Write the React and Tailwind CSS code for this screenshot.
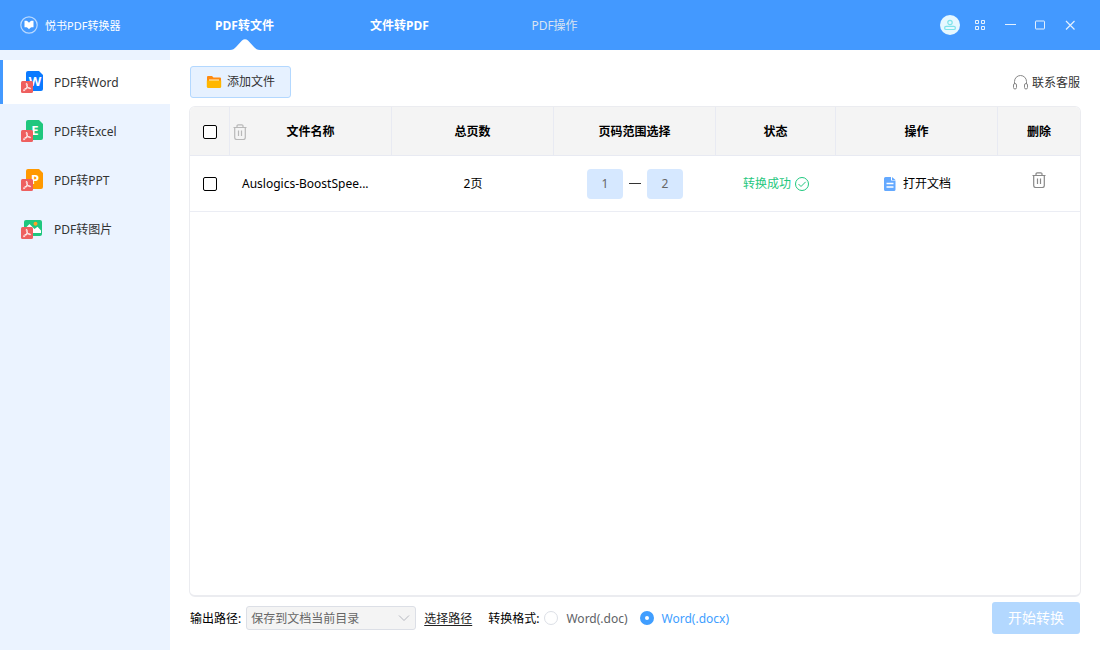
import { useState } from 'react';

const PdfBadge = ({ y = 10 }) => (
    <g transform={`translate(0 ${y})`}>
        <rect width="12" height="12" rx="1.5" fill="#ee5f5f" />
        <path d="M5.3 2.4c1.200-.3 1.100 1.800.8 3.200C5.600 7.700 4 10 2.800 9.800c-1.100-.5.7-2.300 2.700-2.700 2-.5 4.200-.5 4.100.4-.2.9-2.700-.5-3.600-2.300-.5-.9-1-2.500-.7-2.800z" fill="none" stroke="#fff" strokeWidth="0.9" />
    </g>
);

const DocIcon = ({ color, letter }) => (
    <svg width="22" height="22" viewBox="0 0 22 22" aria-hidden="true">
        <path d="M7 0h11l4 4v14a2 2 0 0 1-2 2H7a2 2 0 0 1-2-2V2a2 2 0 0 1 2-2z" fill={color} />
        <text x="14" y="15" textAnchor="middle" fill="#fff" fontSize="13" fontWeight="700" fontFamily="Noto Sans, sans-serif">{letter}</text>
        <PdfBadge />
    </svg>
);

const ImageIcon = () => (
    <svg width="22" height="22" viewBox="0 0 22 22" aria-hidden="true">
        <rect x="3" y="2" width="18" height="16" rx="2" fill="#1fc77e" />
        <circle cx="14.500" cy="5.800" r="2" fill="#fca326" />
        <path d="M4 10.500l4.500-4.500 5 5 3-2.200 3.500 3.700v2.500H4z" fill="#fff" />
        <PdfBadge y={9} />
    </svg>
);

const TrashIcon = () => (
    <svg width="14" height="16" viewBox="0 0 14 16" fill="none" stroke="currentColor" strokeWidth="1.200" aria-hidden="true">
        <path d="M.5 3.500h13M4 3.500V2a1.200 1.200 0 0 1 1.200-1.200h3.600A1.200 1.200 0 0 1 10 2v1.500M1.700 3.500v10a2 2 0 0 0 2 2h6.600a2 2 0 0 0 2-2v-10M5.500 6.500v5.500M8.500 6.500v5.500" />
    </svg>
);

const menus = [
    { key: 'word', label: 'PDF转Word', icon: <DocIcon color="#0b7aff" letter="W" /> },
    { key: 'excel', label: 'PDF转Excel', icon: <DocIcon color="#1fc77e" letter="E" /> },
    { key: 'ppt', label: 'PDF转PPT', icon: <DocIcon color="#ff9900" letter="P" /> },
    { key: 'image', label: 'PDF转图片', icon: <ImageIcon /> },
];

const tabs = ['PDF转文件', '文件转PDF', 'PDF操作'];

const Header = () => {
    const [activeTab, setActiveTab] = useState(0);

    return (
        <header className="flex h-[50px] shrink-0 items-center bg-[#4399ff] pr-5 text-white">
            <div className="flex w-[167px] items-center gap-[7px] pl-5 text-[11px]">
                <svg width="18" height="18" viewBox="0 0 18 18" aria-hidden="true">
                    <circle cx="9" cy="9" r="8.200" fill="none" stroke="#b9d9ff" strokeWidth="1.200" />
                    <path d="M4.500 4.800C6.500 4.500 8 5 9 6.800c1-1.800 2.500-2.300 4.500-2v6.500C11.500 11 10 11.500 9 13.300 8 11.500 6.500 11 4.500 11.300z" fill="#fff" />
                </svg>
                <span className="pt-0.5">悦书PDF转换器</span>
            </div>
            <nav className="flex h-full flex-1">
                {tabs.map((tab, index) => (
                    <button
                        key={tab}
                        onClick={() => setActiveTab(index)}
                        className={`relative h-full w-[155px] pt-0.5 ${index === 2 ? 'text-[#d9e4f2]' : 'font-bold'}`}
                    >
                        {tab}
                        {activeTab === index && (
                            <svg className="absolute bottom-0 left-1/2 -translate-x-1/2" width="30" height="11" viewBox="0 0 30 11" aria-hidden="true">
                                <path d="M0 11c3 0 4-1 6-3l6-6.500q3-2.500 6 0L24 8c2 2 3 3 6 3z" fill="#fff" />
                            </svg>
                        )}
                    </button>
                ))}
            </nav>
            <div className="flex items-center gap-2.5">
                <button aria-label="用户">
                    <svg width="20" height="20" viewBox="0 0 20 20" fill="none" stroke="#7fe3ea" strokeWidth="1.200">
                        <circle cx="10" cy="10" r="10" fill="#e6f8ff" stroke="none" />
                        <circle cx="10" cy="7.500" r="2.200" />
                        <rect x="4.600" y="11.300" width="10.800" height="3.200" rx="1.600" />
                    </svg>
                </button>
                <button aria-label="菜单">
                    <svg width="20" height="20" viewBox="0 0 20 20" fill="none" stroke="#e3f0ff">
                        <path d="M5.500 5.500h3v3h-3zM11.500 5.500h3v3h-3zM5.500 11.500h3v3h-3zM11.500 11.500h3v3h-3z" />
                    </svg>
                </button>
                <button aria-label="最小化">
                    <svg width="20" height="20" viewBox="0 0 20 20" stroke="#e3f0ff"><path d="M5 9.500h11" /></svg>
                </button>
                <button aria-label="最大化">
                    <svg width="20" height="20" viewBox="0 0 20 20" fill="none" stroke="#e3f0ff"><rect x="5.500" y="6" width="9" height="8" rx="0.500" /></svg>
                </button>
                <button aria-label="关闭">
                    <svg width="20" height="20" viewBox="0 0 20 20" stroke="#e3f0ff" strokeWidth="1.200"><path d="M6 6l8.500 8.500M14.500 6L6 14.500" /></svg>
                </button>
            </div>
        </header>
    );
};

const Sidebar = () => {
    const [active, setActive] = useState('word');

    return (
        <aside className="flex w-[170px] shrink-0 flex-col gap-[5px] bg-[#ebf3ff] pt-2.5">
            {menus.map((item) => (
                <button
                    key={item.key}
                    onClick={() => setActive(item.key)}
                    className={`flex h-11 items-center gap-[11px] border-l-3 pl-[18px] text-[#333] ${active === item.key ? 'border-[#4399ff] bg-white' : 'border-transparent'}`}
                >
                    {item.icon}
                    <span className="pt-0.5">{item.label}</span>
                </button>
            ))}
        </aside>
    );
};

const checkboxClass = 'block mx-auto size-3.5 appearance-none rounded-[2px] border border-black bg-white checked:bg-[#4399ff]';
const thClass = 'h-[49px] border-b border-[#e8eaf2] bg-[#f4f4f4] p-0 pt-0.5 font-bold';
const tdClass = 'h-14 border-b border-[#ebedf4] p-0 text-center';
const pageClass = 'h-[30px] w-9 rounded bg-[#d6e8ff] text-center text-[#666] outline-none';

const FileTable = () => {
    const [checked, setChecked] = useState(false);
    const [startPage, setStartPage] = useState('1');
    const [endPage, setEndPage] = useState('2');

    return (
        <div className="-mx-px mt-2 flex-1 overflow-hidden rounded-md border border-b-2 border-[#ebecf0]">
            <table className="w-full table-fixed border-separate border-spacing-0 text-black">
                <colgroup>
                    <col className="w-10" />
                    <col />
                    <col />
                    <col />
                    <col className="w-[120px]" />
                    <col />
                    <col className="w-[82px]" />
                </colgroup>
                <thead>
                    <tr>
                        <th className={`${thClass} border-r`}>
                            <input type="checkbox" aria-label="全选" className={checkboxClass} checked={checked} onChange={() => setChecked(!checked)} />
                        </th>
                        <th className={`${thClass} border-r`}>
                            <div className="grid grid-cols-[14px_1fr_14px] items-center px-[3px]">
                                <button aria-label="删除所选" className="text-[#b8b8b8]"><TrashIcon /></button>
                                <span>文件名称</span>
                            </div>
                        </th>
                        <th className={`${thClass} border-r`}>总页数</th>
                        <th className={`${thClass} border-r`}>页码范围选择</th>
                        <th className={`${thClass} border-r`}>状态</th>
                        <th className={`${thClass} border-r`}>操作</th>
                        <th className={thClass}>删除</th>
                    </tr>
                </thead>
                <tbody>
                    <tr>
                        <td className={tdClass}>
                            <input type="checkbox" aria-label="选择文件" className={checkboxClass} checked={checked} onChange={() => setChecked(!checked)} />
                        </td>
                        <td className={tdClass}>
                            <div className="whitespace-nowrap pl-3 text-left">Auslogics-BoostSpee...</div>
                        </td>
                        <td className={tdClass}>2页</td>
                        <td className={tdClass}>
                            <div className="flex items-center justify-center gap-1.5">
                                <input aria-label="起始页" className={pageClass} value={startPage} onChange={(e) => setStartPage(e.target.value)} />
                                <span className="h-px w-3 bg-[#333]" />
                                <input aria-label="结束页" className={pageClass} value={endPage} onChange={(e) => setEndPage(e.target.value)} />
                            </div>
                        </td>
                        <td className={tdClass}>
                            <div className="flex items-center justify-center gap-1 text-[#1fc77e]">
                                <span>转换成功</span>
                                <svg width="14" height="14" viewBox="0 0 14 14" fill="none" stroke="currentColor" aria-hidden="true">
                                    <circle cx="7" cy="7" r="6.500" />
                                    <path d="M3.500 7l2.500 2.500 4.700-4.700" />
                                </svg>
                            </div>
                        </td>
                        <td className={tdClass}>
                            <button className="mx-auto flex items-center gap-1.5">
                                <svg width="14" height="14" viewBox="0 0 14 14" aria-hidden="true">
                                    <path d="M2.500 0H8v3.500h4.500v9A1.500 1.500 0 0 1 11 14H2.500A1.500 1.500 0 0 1 1 12.500v-11A1.500 1.500 0 0 1 2.500 0zM9 0l3.500 3H9z" fill="#64a9ff" />
                                    <path d="M3.500 6.500h7M3.500 10h7" stroke="#fff" strokeWidth="1.300" />
                                </svg>
                                <span>打开文档</span>
                            </button>
                        </td>
                        <td className={tdClass}>
                            <button aria-label="删除" className="block mx-auto pb-2 text-[#888]"><TrashIcon /></button>
                        </td>
                    </tr>
                </tbody>
            </table>
        </div>
    );
};

const Footer = () => {
    const [format, setFormat] = useState('docx');
    const radioClass = 'size-3.5 appearance-none rounded-full border border-[#dcdfe6] bg-white checked:border-[5px] checked:border-[#409eff]';

    return (
        <footer className="flex h-[53px] shrink-0 items-center pb-3 text-black">
            <label htmlFor="output-path" className="pt-0.5">输出路径:</label>
            <div className="relative ml-[5px]">
                <select id="output-path" className="h-6 w-[170px] appearance-none rounded-[3px] border border-[#dcdfe6] bg-[#f4f4f4] pl-1 pt-0.5 text-[#666]">
                    <option>保存到文档当前目录</option>
                </select>
                <svg className="pointer-events-none absolute right-1.5 top-2" width="12" height="8" viewBox="0 0 12 8" fill="none" stroke="#b4b7bf" aria-hidden="true">
                    <path d="M1 1.500l5 5 5-5" />
                </svg>
            </div>
            <a href="#path" className="ml-2 pt-0.5 text-[#222] underline underline-offset-2">选择路径</a>
            <span className="ml-4 pt-0.5">转换格式:</span>
            <label className={`ml-[5px] flex items-center gap-2 ${format === 'doc' ? 'text-[#409eff]' : 'text-[#606266]'}`}>
                <input type="radio" name="format" className={radioClass} checked={format === 'doc'} onChange={() => setFormat('doc')} />
                <span className="pt-0.5">Word(.doc)</span>
            </label>
            <label className={`ml-3 flex items-center gap-2 ${format === 'docx' ? 'text-[#409eff]' : 'text-[#606266]'}`}>
                <input type="radio" name="format" className={radioClass} checked={format === 'docx'} onChange={() => setFormat('docx')} />
                <span className="pt-0.5">Word(.docx)</span>
            </label>
            <button className="ml-auto h-8 w-[88px] rounded-[3px] bg-[#b3d8ff] text-sm text-white">开始转换</button>
        </footer>
    );
};

const App = () => {
    return (
        <div className="flex h-screen flex-col bg-white font-['Noto_Sans','Noto_Sans_CJK_SC',sans-serif] text-xs">
            <Header />
            <div className="flex min-h-0 flex-1">
                <Sidebar />
                <main className="flex min-w-0 flex-1 flex-col px-5 pt-4">
                    <div className="flex items-center justify-between">
                        <button className="flex h-8 items-center gap-[5px] rounded-[3px] border border-[#b3d8ff] bg-[#e6f1ff] px-[15px] text-[#333]">
                            <svg width="16" height="14" viewBox="0 0 16 14" aria-hidden="true">
                                <path d="M1 2a1 1 0 0 1 1-1h4l1.500 1.500H14a1 1 0 0 1 1 1V8H1z" fill="#ff8a0f" />
                                <path d="M3 4.500h10v2H3z" fill="#fff0cc" />
                                <path d="M.8 5.500h14.400V11.500a1.500 1.500 0 0 1-1.500 1.500H2.300a1.500 1.500 0 0 1-1.500-1.500z" fill="#ffb700" />
                            </svg>
                            <span>添加文件</span>
                        </button>
                        <a href="#service" className="flex items-center gap-1 text-[#333]">
                            <svg width="15" height="15" viewBox="0 0 15 15" fill="none" stroke="#888" aria-hidden="true">
                                <path d="M1.500 9V6.500a6 6 0 0 1 12 0V9" />
                                <rect x="0.500" y="8.500" width="3" height="5.500" rx="1.500" />
                                <rect x="11.500" y="8.500" width="3" height="5.500" rx="1.500" />
                            </svg>
                            <span className="pt-0.5">联系客服</span>
                        </a>
                    </div>
                    <FileTable />
                    <Footer />
                </main>
            </div>
        </div>
    );
};

export default App;
